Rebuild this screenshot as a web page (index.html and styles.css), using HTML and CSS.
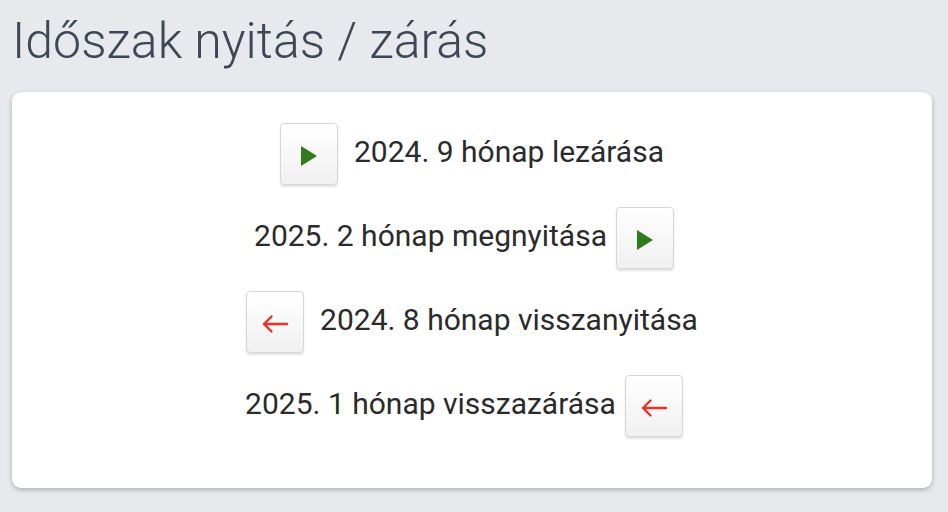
FILE: index.html
```html
<!DOCTYPE html>
<html lang="hu">
<head>
<meta charset="utf-8">
<link rel="stylesheet" href="styles.css">
</head>
<body>
<h1 class="title">Időszak nyitás / zárás</h1>
<div class="card">
  <div class="row">
    <button class="btn btn-left"><svg width="18" height="20" viewBox="0 0 18 20"><polygon points="1,0 17,10 1,20" fill="#2e7d1a"/></svg></button>
    <span class="label">2024. 9 hónap lezárása</span>
  </div>
  <div class="row">
    <span class="label">2025. 2 hónap megnyitása</span>
    <button class="btn btn-right"><svg width="18" height="20" viewBox="0 0 18 20"><polygon points="1,0 17,10 1,20" fill="#2e7d1a"/></svg></button>
  </div>
  <div class="row">
    <button class="btn btn-left"><svg width="28" height="20" viewBox="0 0 28 20"><path d="M26 10H3M10.5 2.5L3 10l7.5 7.5" fill="none" stroke="#ee3124" stroke-width="2.4" stroke-linecap="round" stroke-linejoin="round"/></svg></button>
    <span class="label">2024. 8 hónap visszanyitása</span>
  </div>
  <div class="row">
    <span class="label">2025. 1 hónap visszazárása</span>
    <button class="btn btn-right"><svg width="28" height="20" viewBox="0 0 28 20"><path d="M26 10H3M10.5 2.5L3 10l7.5 7.5" fill="none" stroke="#ee3124" stroke-width="2.4" stroke-linecap="round" stroke-linejoin="round"/></svg></button>
  </div>
</div>
</body>
</html>
```
FILE: styles.css
```css
html, body {
  margin: 0;
  padding: 0;
}
body {
  background: #e8e9ed;
  font-family: Roboto, "Liberation Sans", sans-serif;
  width: 948px;
  height: 512px;
  overflow: hidden;
}
.title {
  margin: 0;
  padding: 11px 0 0 12px;
  height: 92px;
  box-sizing: border-box;
  font-size: 50px;
  font-weight: 300;
  color: #3d4756;
  line-height: 60px;
}
.card {
  margin: 0 16px 0 12px;
  background: #fff;
  border-radius: 9px;
  box-shadow: 0 2px 5px rgba(0,0,0,0.25);
  height: 396px;
  box-sizing: border-box;
  padding-top: 30px;
  display: flex;
  flex-direction: column;
  align-items: center;
  gap: 20px;
}
.row {
  display: flex;
  align-items: center;
  height: 64px;
}
.label {
  font-size: 30px;
  line-height: 36px;
  padding-bottom: 5px;
  color: #2b2b2b;
}
.btn {
  width: 58px;
  height: 62px;
  border: 1px solid #d6d6d6;
  border-radius: 4px;
  background: linear-gradient(#ffffff, #f0f0f0);
  box-shadow: 0 2px 2px rgba(0,0,0,0.12);
  display: flex;
  align-items: center;
  justify-content: center;
  padding: 0;
}
.btn svg { margin-top: 3px; }
.btn-left { margin-right: 16px; }
.btn-right { margin-left: 9px; margin-right: 16px; }
```
